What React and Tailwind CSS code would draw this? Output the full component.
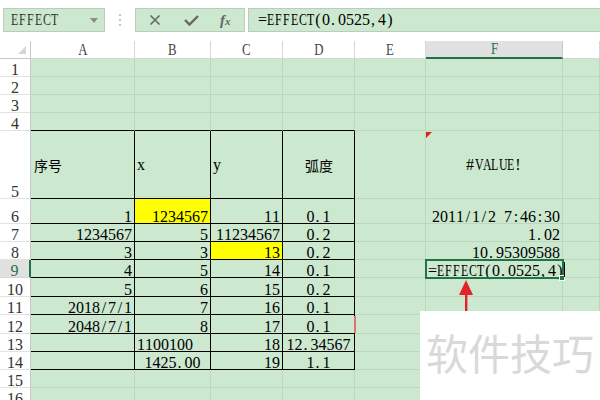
import React from "react"

const SERIF = "font-['Liberation_Serif','Noto_Sans_CJK_SC',serif]"
const CJK = "font-['Noto_Sans_CJK_SC',sans-serif]"

// half-width characters on an 8px pitch, like the sheet's SimSun font
const Mono = ({ t }) =>
  t.split("").map((ch, i) => (
    <span
      key={i}
      className={`inline-block w-[8px] ${ch === "." || ch === "," ? "text-left pl-[1px]" : "text-center"} ${
        /[A-Z]/.test(ch) ? "scale-x-[0.74]" : ""
      }`}
    >
      {ch === " " ? "\u00a0" : ch}
    </span>
  ))

const colW = ["w-[104px]", "w-[76px]", "w-[72px]", "w-[72px]", "w-[71px]", "w-[137px]", "flex-1"]
const letters = ["A", "B", "C", "D", "E", "F", ""]

// each row: label, height class, cells A..F
const rows = [
  { n: "1", h: "h-[18px]", c: [] },
  { n: "2", h: "h-[18px]", c: [] },
  { n: "3", h: "h-[18px]", c: [] },
  { n: "4", h: "h-[18px]", c: [], top: true },
  {
    n: "5", h: "h-[68px]", mid: true,
    c: [{ t: "序号", a: "l", cjk: true }, { t: "x", a: "l" }, { t: "y", a: "l" }, { t: "弧度", a: "c", cjk: true }, null, { t: "#VALUE!", a: "c" }],
  },
  {
    n: "6", h: "h-[25px]",
    c: [{ t: "1", a: "r" }, { t: "1234567", a: "r", y: true }, { t: "11", a: "r" }, { t: "0.1", a: "c" }, null, { t: "2011/1/2 7:46:30", a: "r" }],
  },
  {
    n: "7", h: "h-[18px]",
    c: [{ t: "1234567", a: "r" }, { t: "5", a: "r" }, { t: "11234567", a: "r" }, { t: "0.2", a: "c" }, null, { t: "1.02", a: "r" }],
  },
  {
    n: "8", h: "h-[18px]",
    c: [{ t: "3", a: "r" }, { t: "3", a: "r" }, { t: "13", a: "r", y: true }, { t: "0.2", a: "c" }, null, { t: "10.95309588", a: "r" }],
  },
  {
    n: "9", h: "h-[18px]", sel: true,
    c: [{ t: "4", a: "r" }, { t: "5", a: "r" }, { t: "14", a: "r" }, { t: "0.1", a: "c" }, null, { t: "=EFFECT(0.0525,4)", a: "l" }],
  },
  { n: "10", h: "h-[19px]", c: [{ t: "5", a: "r" }, { t: "6", a: "r" }, { t: "15", a: "r" }, { t: "0.2", a: "c" }] },
  { n: "11", h: "h-[18px]", c: [{ t: "2018/7/1", a: "r" }, { t: "7", a: "r" }, { t: "16", a: "r" }, { t: "0.1", a: "c" }] },
  { n: "12", h: "h-[19px]", c: [{ t: "2048/7/1", a: "r" }, { t: "8", a: "r" }, { t: "17", a: "r" }, { t: "0.1", a: "c" }] },
  { n: "13", h: "h-[18px]", c: [null, { t: "1100100", a: "l" }, { t: "18", a: "r" }, { t: "12.34567", a: "c" }] },
  { n: "14", h: "h-[18px]", c: [null, { t: "1425.00", a: "c" }, { t: "19", a: "r" }, { t: "1.1", a: "c" }] },
  { n: "15", h: "h-[18px]", c: [] },
  { n: "16", h: "h-[18px]", c: [] },
]

const tableRows = ["5", "6", "7", "8", "9", "10", "11", "12", "13", "14"]

const alignCls = { l: "justify-start pl-[2px]", r: "justify-end pr-[2px]", c: "justify-center" }

const Cell = ({ row, i }) => {
  const cell = row.c[i]
  const inTable = i < 4 && tableRows.includes(row.n)
  let border = "border-[#bcd6bf]"
  if (inTable) border = "border-black"
  else if (row.top && i < 4) border = "border-r-[#bcd6bf] border-b-black"
  return (
    <div
      className={`${colW[i]} h-full shrink-0 flex border-r border-b ${border} ${row.mid ? "items-center" : "items-end"} ${
        cell ? alignCls[cell.a] : ""
      } ${cell && cell.y ? "bg-[#ffff00]" : ""}`}
    >
      {cell && (
        <span
          className={`whitespace-nowrap text-black ${
            cell.cjk ? `${CJK} text-[14px] leading-[16px] pl-[1px]` : `${SERIF} text-[16px] leading-[13px]`
          }`}
        >
          {cell.cjk ? cell.t : <Mono t={cell.t} />}
        </span>
      )}
    </div>
  )
}

const Toolbar = () => (
  <div className="h-[41px] flex items-start pt-[8px] pl-[3px] bg-white">
    <div className="w-[102px] h-[24px] border border-[#bccbbd] bg-[#cce8cf] flex items-center pl-[6px] pr-[6px]">
      <span className={`${SERIF} text-[16px] text-[#333] whitespace-nowrap`}>
        <Mono t="EFFECT" />
      </span>
      <span className="ml-auto w-0 h-0 border-l-[4px] border-r-[4px] border-t-[5px] border-l-transparent border-r-transparent border-t-[#8c8c8c]" />
    </div>
    <div className="w-[30px] h-[24px] flex flex-col items-center justify-center gap-[3px]">
      <span className="w-[2px] h-[2px] bg-[#c4c4c4]" />
      <span className="w-[2px] h-[2px] bg-[#c4c4c4]" />
      <span className="w-[2px] h-[2px] bg-[#c4c4c4]" />
    </div>
    <div className="w-[110px] h-[24px] border border-[#bccbbd] bg-[#cce8cf] flex items-center">
      <svg className="ml-[13px]" width="12" height="12" viewBox="0 0 12 12">
        <path d="M1.5 1.5 L10.5 10.5 M10.5 1.5 L1.5 10.5" stroke="#666" strokeWidth="1.6" />
      </svg>
      <svg className="ml-[23px]" width="15" height="12" viewBox="0 0 15 12">
        <path d="M1 6 L5.5 10.5 L14 2" stroke="#666" strokeWidth="2.4" fill="none" />
      </svg>
      <span className="ml-[21px] font-['Liberation_Serif',serif] italic font-bold text-[15px] leading-none text-[#666]">
        f<span className="text-[11px]">x</span>
      </span>
    </div>
    <div className="ml-[3px] flex-1 h-[24px] border border-r-0 border-[#bccbbd] bg-[#cce8cf] flex items-center pl-[9px]">
      <span className={`${SERIF} text-[16px] text-black whitespace-nowrap`}>
        <Mono t="=EFFECT(0.0525,4)" />
      </span>
    </div>
  </div>
)

const ColumnHeader = () => (
  <div className="h-[18px] flex bg-white">
    <div className="w-[31px] shrink-0 h-full border-r border-b border-[#c8c8c8] relative">
      <svg className="absolute right-[4px] bottom-[4px]" width="8" height="8" viewBox="0 0 8 8">
        <polygon points="8,0 8,8 0,8" fill="#d6d6d6" />
      </svg>
    </div>
    {letters.map((l, i) => (
      <div
        key={i}
        className={`${colW[i]} shrink-0 h-full flex items-center justify-center ${
          l === "F" ? "bg-[#e1e1e1] border-b-2 border-b-[#217346] border-r border-r-[#c8c8c8]" : "border-r border-b border-[#d6d6d6]"
        }`}
      >
        <span className={`${SERIF} text-[16px] leading-[14px] inline-block scale-x-[0.8] ${l === "F" ? "text-[#217346]" : "text-[#444]"}`}>{l}</span>
      </div>
    ))}
  </div>
)

export default function App() {
  return (
    <div className="relative w-[600px] h-[400px] overflow-hidden bg-white">
      <Toolbar />
      <ColumnHeader />
      <div className="flex flex-col bg-[#cce8cf]">
        {rows.map((row) => (
          <div key={row.n} className={`${row.h} flex shrink-0`}>
            <div
              className={`w-[31px] shrink-0 h-full flex items-end justify-center border-b ${
                row.sel
                  ? "bg-[#e1e1e1] border-r-2 border-r-[#217346] border-b-[#d6d6d6]"
                  : "bg-white border-r border-r-[#c8c8c8] border-b-[#e2e2e2]"
              }`}
            >
              <span className={`${SERIF} text-[16px] leading-[13px] whitespace-nowrap ${row.sel ? "text-[#217346]" : "text-[#333]"}`}>
                <Mono t={row.n} />
              </span>
            </div>
            {letters.map((_, i) => (
              <Cell key={i} row={row} i={i} />
            ))}
          </div>
        ))}
      </div>

      {/* comment marker */}
      <svg className="absolute left-[426px] top-[132px]" width="6" height="6" viewBox="0 0 6 6">
        <polygon points="0,0 6,0 0,6" fill="#e0201c" />
      </svg>

      {/* stray red border mark */}
      <div className="absolute left-[354px] top-[316px] w-[2px] h-[17px] bg-[#e8706a]" />

      {/* active cell */}
      <div className="absolute left-[425px] top-[259px] w-[139px] h-[20px] border-2 border-[#217346] pointer-events-none" />
      <div className="absolute left-[559px] top-[275px] w-[6px] h-[6px] bg-[#217346] border border-white" />
      <div className="absolute left-[564px] top-[262px] w-[1px] h-[15px] bg-black" />

      {/* arrow */}
      <svg className="absolute left-[456px] top-[280px]" width="20" height="34" viewBox="0 0 20 34">
        <polygon points="10,0 3,15 17,15" fill="#e3222a" />
        <rect x="9" y="13" width="2.4" height="21" fill="#e3222a" />
      </svg>

      {/* watermark */}
      <div className="absolute left-[420px] top-[311px] w-[180px] h-[89px] bg-white pl-[6px] pt-[20px]">
        <span className={`${CJK} text-[42px] leading-none text-[#d9d9d9] whitespace-nowrap`}>软件技巧</span>
      </div>
    </div>
  )
}
